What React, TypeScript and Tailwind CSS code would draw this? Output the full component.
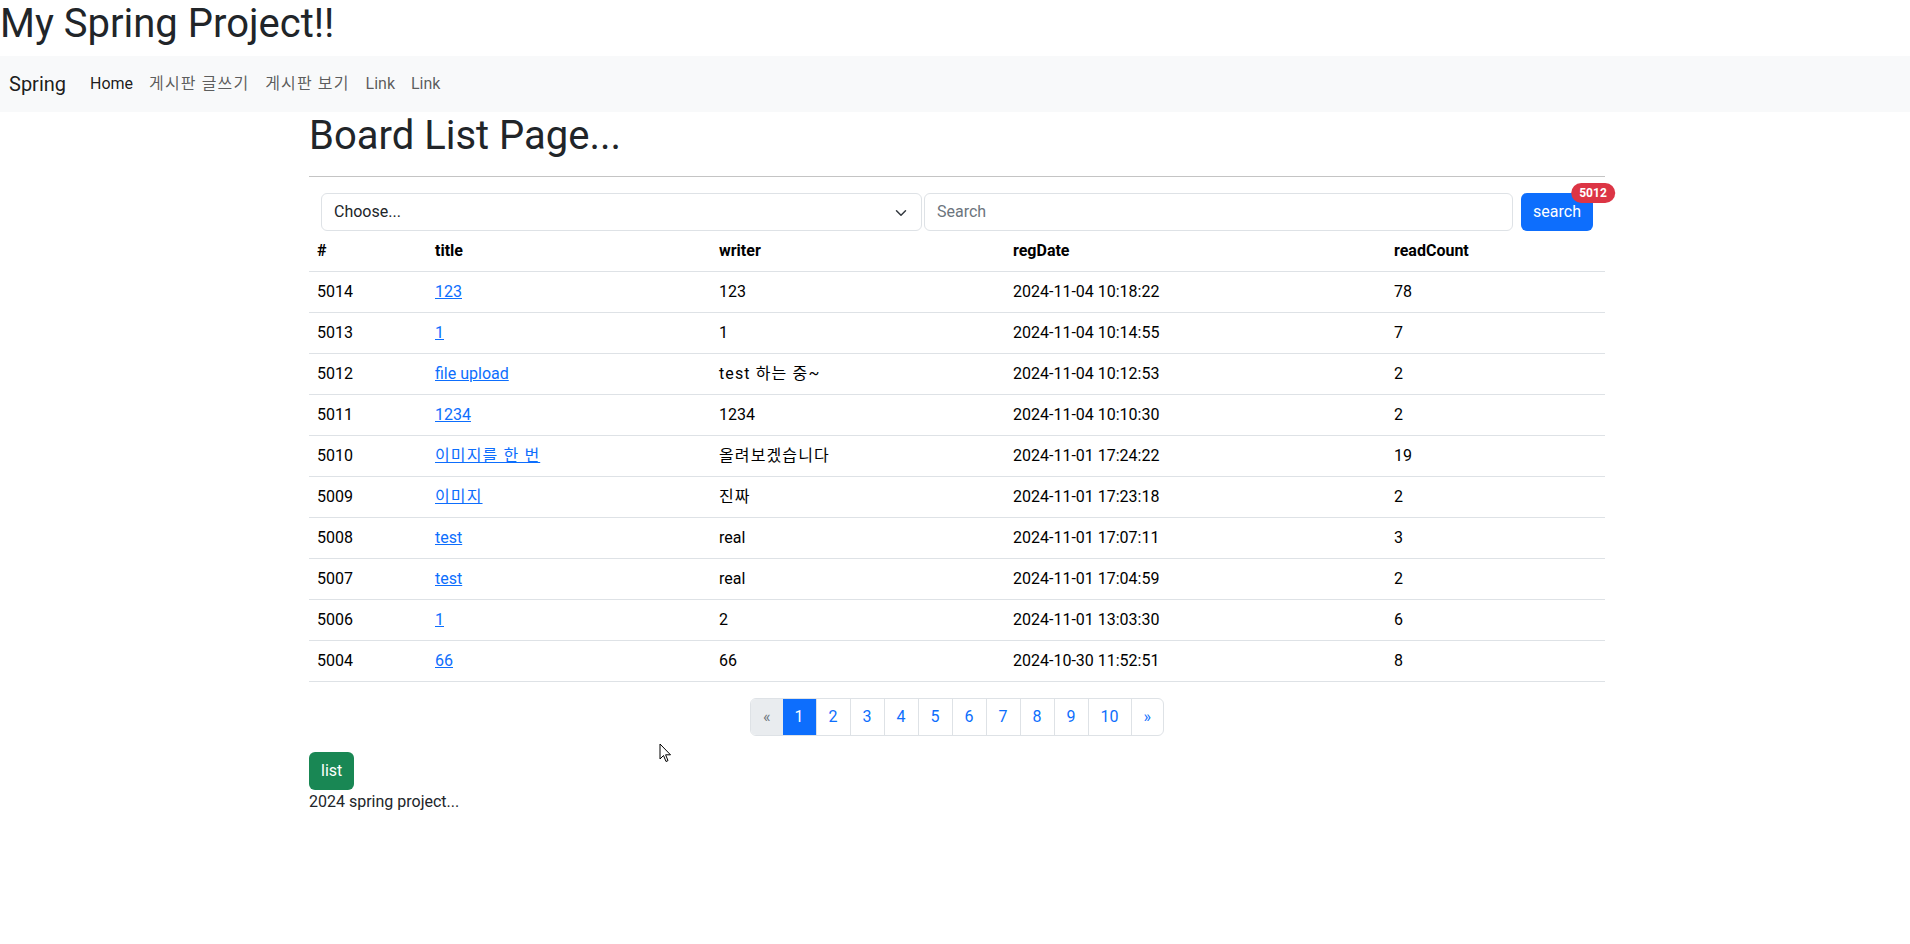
type Board = {
  bno: number;
  title: string;
  writer: string;
  regDate: string;
  readCount: number;
};

const boards: Board[] = [
  { bno: 5014, title: "123", writer: "123", regDate: "2024-11-04 10:18:22", readCount: 78 },
  { bno: 5013, title: "1", writer: "1", regDate: "2024-11-04 10:14:55", readCount: 7 },
  { bno: 5012, title: "file upload", writer: "test 하는 중~", regDate: "2024-11-04 10:12:53", readCount: 2 },
  { bno: 5011, title: "1234", writer: "1234", regDate: "2024-11-04 10:10:30", readCount: 2 },
  { bno: 5010, title: "이미지를 한 번", writer: "올려보겠습니다", regDate: "2024-11-01 17:24:22", readCount: 19 },
  { bno: 5009, title: "이미지", writer: "진짜", regDate: "2024-11-01 17:23:18", readCount: 2 },
  { bno: 5008, title: "test", writer: "real", regDate: "2024-11-01 17:07:11", readCount: 3 },
  { bno: 5007, title: "test", writer: "real", regDate: "2024-11-01 17:04:59", readCount: 2 },
  { bno: 5006, title: "1", writer: "2", regDate: "2024-11-01 13:03:30", readCount: 6 },
  { bno: 5004, title: "66", writer: "66", regDate: "2024-10-30 11:52:51", readCount: 8 },
];

const pages = [1, 2, 3, 4, 5, 6, 7, 8, 9, 10];

// hangul in the original font runs a little wider than Noto CJK
const hasKo = (s: string) => /[\uac00-\ud7a3]/.test(s);

const App: React.FC = () => {
  return (
    <div className="relative min-h-screen bg-white text-[#212529] text-base leading-6 font-['Roboto','Noto_Sans_CJK_KR',sans-serif]">
      <h1 className="text-[40px] leading-[48px] font-normal mb-2">My Spring Project!!</h1>

      {/* navbar */}
      <nav className="bg-[#f8f9fa] h-[56px] flex items-center pl-[9px]">
        <a className="text-[20px] leading-[30px] text-black/90 mr-4">Spring</a>
        <div className="flex">
          <a className="px-2 text-black/90">Home</a>
          <a className="px-2 text-black/65 tracking-[0.07em]">게시판 글쓰기</a>
          <a className="px-2 text-black/65 tracking-[0.07em]">게시판 보기</a>
          <a className="px-2 text-black/65">Link</a>
          <a className="px-2 text-black/65">Link</a>
        </div>
      </nav>

      <div className="w-[1296px] ml-[309px]">
        <h1 className="text-[40px] leading-[48px] font-normal mb-2">Board List Page...</h1>
        <hr className="mt-4 mb-4 border-t border-[#c4c4c4]" />

        {/* search form */}
        <div className="px-3 flex items-center">
          <div className="relative w-[601px] h-[38px] border border-[#dee2e6] rounded-md flex items-center pl-3 text-[#212529]">
            Choose...
            <svg className="absolute right-3 top-[13px] w-4 h-3" viewBox="0 0 16 16" fill="none">
              <path d="m2 5 6 6 6-6" stroke="#343a40" strokeWidth="2" strokeLinecap="round" strokeLinejoin="round" />
            </svg>
          </div>
          <div className="flex-1 ml-[2px] h-[38px] border border-[#dee2e6] rounded-md flex items-center pl-3 text-[#6c757d]">
            Search
          </div>
          <button className="relative ml-2 h-[38px] w-[72px] bg-[#0d6efd] text-white rounded-md">
            search
            <span className="absolute top-0 left-full -translate-x-1/2 -translate-y-1/2 rounded-full bg-[#dc3545] text-white text-[12px] font-bold leading-none px-[8px] py-[4px]">
              5012
            </span>
          </button>
        </div>

        {/* table */}
        <table className="w-full table-fixed border-collapse">
          <colgroup>
            <col className="w-[118px]" />
            <col className="w-[284px]" />
            <col className="w-[294px]" />
            <col className="w-[381px]" />
            <col className="w-[219px]" />
          </colgroup>
          <thead>
            <tr className="border-b border-[#dee2e6]">
              <th className="p-2 text-left font-bold text-black">#</th>
              <th className="p-2 text-left font-bold text-black">title</th>
              <th className="p-2 text-left font-bold text-black">writer</th>
              <th className="p-2 text-left font-bold text-black">regDate</th>
              <th className="p-2 text-left font-bold text-black">readCount</th>
            </tr>
          </thead>
          <tbody>
            {boards.map((b) => (
              <tr key={b.bno} className="border-b border-[#dee2e6] text-black">
                <td className="p-2">{b.bno}</td>
                <td className="p-2">
                  <a className={hasKo(b.title) ? "text-[#0d6efd] underline tracking-[0.07em]" : "text-[#0d6efd] underline"}>
                    {b.title}
                  </a>
                </td>
                <td className={hasKo(b.writer) ? "p-2 tracking-[0.07em]" : "p-2"}>{b.writer}</td>
                <td className="p-2">{b.regDate}</td>
                <td className="p-2">{b.readCount}</td>
              </tr>
            ))}
          </tbody>
        </table>

        {/* pagination */}
        <div className="mt-4 mb-4 flex justify-center">
          <ul className="flex border border-[#dee2e6] rounded-md overflow-hidden">
            <li className="px-3 py-1.5 bg-[#e9ecef] text-[#6c757d]">«</li>
            {pages.map((p) => (
              <li
                key={p}
                className={
                  p === 1
                    ? "px-3 py-1.5 bg-[#0d6efd] text-white"
                    : "px-3 py-1.5 border-l border-[#dee2e6] text-[#0d6efd]"
                }
              >
                {p}
              </li>
            ))}
            <li className="px-3 py-1.5 border-l border-[#dee2e6] text-[#0d6efd]">»</li>
          </ul>
        </div>

        <button className="h-[38px] px-3 bg-[#198754] text-white rounded-md">list</button>
        <div>2024 spring project...</div>
      </div>

      {/* mouse pointer captured in screenshot */}
      <svg className="absolute left-[659px] top-[743px] w-[13px] h-[20px]" viewBox="0 0 13 20">
        <path d="M1 1 L1 16 L4.5 12.5 L7 18.5 L9 17.6 L6.6 11.8 L11.5 11.8 Z" fill="white" stroke="black" strokeWidth="1" strokeLinejoin="round" />
      </svg>
    </div>
  );
};

export default App;
